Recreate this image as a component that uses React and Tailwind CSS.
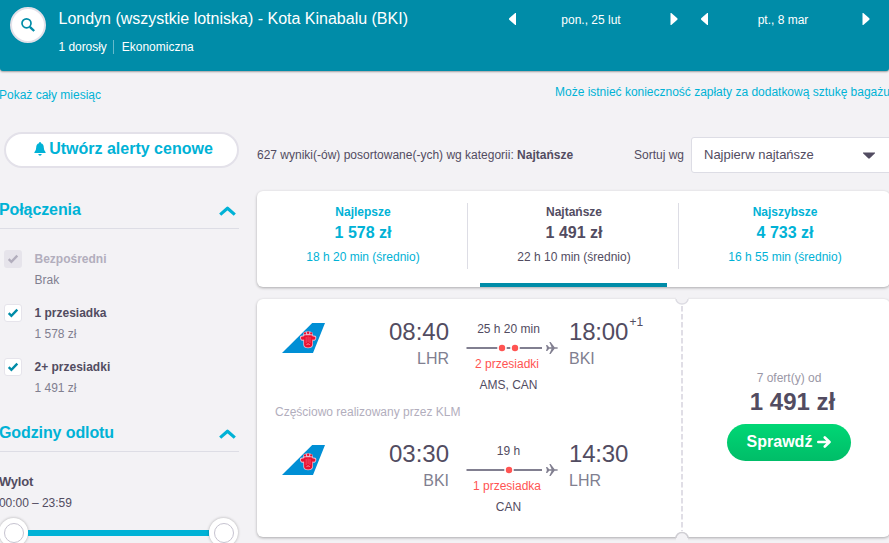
import React from "react";

function Chevron() {
  return (
    <svg width="17" height="10" viewBox="0 0 17 10" className="block" fill="none" stroke="#00b2d6" strokeWidth="3.2" strokeLinecap="butt" strokeLinejoin="round">
      <path d="M1.2 8.6 L8.5 2.2 L15.8 8.6" />
    </svg>
  );
}

function Triangle({ left }) {
  return (
    <svg width="8" height="12" viewBox="0 0 8 12" className="block" fill="#fff">
      {left ? <path d="M8 0 V12 H7.2 L1.2 6.8 Q0.7 6 1.2 5.2 L7.2 0 Z" /> : <path d="M0.5 0 V12 H1.3 L7.3 6.8 Q7.8 6 7.3 5.2 L1.3 0 Z" />}
    </svg>
  );
}

function SectionTitle({ children }) {
  return (
    <div className="flex h-[37px] w-[240px] items-center justify-between border-b border-[#dddde5] pr-[3.5px]">
      <h2 className="text-[16px] font-bold leading-[20px] tracking-[-0.1px] text-[#00b2d6]">{children}</h2>
      <div className="pt-[2px]"><Chevron /></div>
    </div>
  );
}

function StopFilter({ label, price, disabled }) {
  return (
    <div className="flex h-[54px] pl-1">
      <div className={disabled ? "flex size-[18px] items-center justify-center rounded-[3px] bg-[#e6e4eb]" : "flex size-[18px] items-center justify-center rounded-[3px] border border-[#e6e4eb] bg-white"}>
        <svg width="12" height="10" viewBox="0 0 12 10" fill="none" stroke={disabled ? "#b2aebd" : "#008ca8"} strokeWidth="2.4">
          <path d="M1.7 5.2 L4.4 7.8 L10.3 1.7" />
        </svg>
      </div>
      <div className="ml-[12.5px] text-[12px]">
        <div className={disabled ? "h-[18px] font-bold leading-[18px] text-[#b2aebd]" : "h-[18px] font-bold leading-[18px] text-[#524c61]"}>{label}</div>
        <div className="mt-[3px] leading-[18px] text-[#817f90]">{price}</div>
      </div>
    </div>
  );
}

function Knob() {
  return (
    <div className="flex size-[29px] items-center justify-center rounded-full bg-white shadow-[0_0_3px_rgba(0,0,0,0.3)]">
      <div className="size-[20px] rounded-full border border-[#c6c3d0]" />
    </div>
  );
}

function Tab({ title, price, time, active, divider }) {
  return (
    <div className="relative w-[211px] shrink-0 pt-3">
      <div className={(divider ? "border-r border-[#dddde5] " : "border-r border-transparent ") + "h-[66px] pl-[2px] text-center text-[12px] " + (active ? "text-[#524c61]" : "text-[#00b2d6]")}>
        <div className="font-bold leading-[18px]">{title}</div>
        <div className="text-[16px] font-bold leading-[23px]">{price}</div>
        <div className="pt-[4px] leading-[18px]">{time}</div>
      </div>
      {active && <div className="absolute bottom-0 left-[12px] h-[4px] w-[187px] bg-[#008ca8]" />}
    </div>
  );
}

function TailLogo() {
  return (
    <svg width="43" height="30" viewBox="0 0 43 30" className="mt-[6px] block shrink-0">
      <path d="M30.2 0 H43 L31 30 H0 Z" fill="#008fd5" />
      <path d="M18 15 Q17.5 12.2 21 12.6 L21.6 9.5 Q26 7 30.4 9.5 L31 12.6 Q34.8 12.2 34.3 15 Q34 18 31 17.8 V22 Q30.4 25.2 26.1 25.2 Q21.8 25.2 21.3 22 V17.8 Q18.3 18 18 15 Z" fill="#e9b9cd" />
      <path d="M18.9 15.2 Q18.6 13.2 21.6 13.6 Q22.2 11.8 24 12.2 H28.3 Q30.2 11.8 30.7 13.6 Q33.7 13.2 33.4 15.2 Q33 17.2 30.3 16.6 V21 Q30.4 24.4 26.1 24.4 Q21.8 24.4 22.1 21 V16.6 Q19.3 17.2 18.9 15.2 Z" fill="#ea1030" />
      <g fill="#ea1030"><circle cx="23" cy="10.4" r="1.1" /><circle cx="26.1" cy="9.7" r="1.2" /><circle cx="29.2" cy="10.4" r="1.1" /></g>
      <path d="M24.2 14 V20 M26.1 13.5 V19 M28 14 V20" stroke="#f7a0b2" strokeWidth="0.4" />
      <path d="M24.5 21.6 L26.1 20.8 L27.7 21.6" stroke="#f4c9d8" strokeWidth="0.7" fill="none" />
    </svg>
  );
}

function Route({ stops }) {
  return (
    <svg width="93" height="14" viewBox="0 0 93 14" className="block shrink-0 overflow-visible">
      <path d="M0.5 7 H76" stroke="#817f90" strokeWidth="2" />
      {stops.map((x) => <circle key={x} cx={x} cy="7" r="4.8" fill="#fff" />)}
      {stops.map((x) => <circle key={x} cx={x} cy="7" r="3.2" fill="#ff5452" />)}
      <path d="M80 4 H81.2 L83.2 6.3 H85.6 L83.3 1 H84.6 L88.6 6.3 H90.5 Q92 6.5 92 7 Q92 7.5 90.5 7.7 H88.6 L84.6 13 H83.3 L85.6 7.7 H83.2 L81.2 10 H80 L80.9 7 Z" fill="#817f90" />
    </svg>
  );
}

function Leg({ depart, from, duration, stops, stopLabel, via, arrive, to, extra }) {
  return (
    <div className="flex h-[79px] pl-[25px]">
      <TailLogo />
      <div className="w-[124px] shrink-0 pt-px text-right">
        <div className="text-[24px] leading-[28px] text-[#524c61]">{depart}</div>
        <div className="text-[16px] leading-[26px] text-[#817f90]">{from}</div>
      </div>
      <div className="ml-[17px] w-[85px] shrink-0 text-center text-[12px] text-[#524c61]">
        <div className="leading-[24px]">{duration}</div>
        <Route stops={stops} />
        <div className="-mt-px -ml-[3px] leading-[20px] whitespace-nowrap text-[#ff5452]">{stopLabel}</div>
        <div className="leading-[22px]">{via}</div>
      </div>
      <div className="ml-[18px] shrink-0 pt-px">
        <div className="flex text-[24px] leading-[28px] tracking-[-0.2px] text-[#524c61]">
          {arrive}
          {extra && <span className="-mt-[6px] ml-[1.5px] text-[12px] leading-[20px] tracking-normal">{extra}</span>}
        </div>
        <div className="text-[16px] leading-[26px] text-[#817f90]">{to}</div>
      </div>
    </div>
  );
}

export default function App() {
  return (
    <div className="h-[543px] w-[889px] overflow-hidden bg-[#f3f2f5] text-[12px] text-[#524c61] [font-family:'Liberation_Sans',Arial,sans-serif]">
      <header className="flex h-[71px] rounded-b-[3px] bg-[#008ca8] text-white shadow-[0_1px_2px_rgba(0,0,0,0.35)]">
        <div className="mt-[7px] ml-[10px] flex size-[36px] shrink-0 items-center justify-center rounded-full border-2 border-[#e3e1e9] bg-white">
          <svg width="16" height="16" viewBox="0 0 16 16" fill="none" stroke="#008ca8">
            <circle cx="6.5" cy="6.3" r="4.5" strokeWidth="1.7" />
            <path d="M9.8 9.8 L14.2 14" strokeWidth="2.4" />
          </svg>
        </div>
        <div className="ml-[12.5px] w-[446px] shrink-0 pt-[9px]">
          <h1 className="text-[16px] leading-[20px] whitespace-nowrap">Londyn (wszystkie lotniska) - Kota Kinabalu (BKI)</h1>
          <div className="mt-[11px] flex leading-[14px]">
            <span className="border-r border-[#66bacb] pr-[6px] tracking-[-0.05px]">1 dorosły</span>
            <span className="pl-[8px]">Ekonomiczna</span>
          </div>
        </div>
        <div className="mt-[13px] ml-[3.5px] flex h-[12px] w-[170px] shrink-0 items-center justify-between">
          <Triangle left /><span className="mr-[4px] pt-[2px] leading-[14px]">pon., 25 lut</span><Triangle />
        </div>
        <div className="mt-[13px] ml-[22px] flex h-[12px] w-[170px] shrink-0 items-center justify-between">
          <Triangle left /><span className="mr-[4px] pt-[2px] leading-[14px]">pt., 8 mar</span><Triangle />
        </div>
      </header>

      <div className="flex h-[61px] justify-between text-[#00b2d6]">
        <a className="-ml-px pt-[16px] leading-[16px] whitespace-nowrap">Pokaż cały miesiąc</a>
        <a className="w-[334px] pt-[13px] leading-[16px] tracking-[-0.01px] whitespace-nowrap">Może istnieć konieczność zapłaty za dodatkową sztukę bagażu</a>
      </div>

      <div className="flex">
        <aside className="w-[257px] shrink-0">
          <button className="ml-1 flex h-[36px] w-[235px] items-center justify-center rounded-full border-2 border-[#e3e1e9] bg-white pb-[2px] pl-[4px] text-[16px] font-bold whitespace-nowrap text-[#00b2d6]">
            <svg width="12" height="14" viewBox="0 0 12 14" fill="#00b2d6" className="mr-[3px]">
              <path d="M6 0 Q7 0 7 1.2 Q9.8 2 9.8 5.5 Q9.8 8.5 11.6 10.3 V11 H0.4 V10.3 Q2.2 8.5 2.2 5.5 Q2.2 2 5 1.2 Q5 0 6 0 Z M4.2 12 H7.8 Q7.4 13.7 6 13.7 Q4.6 13.7 4.2 12 Z" />
            </svg>
            Utwórz alerty cenowe
          </button>
          <div className="mt-[24px] -ml-px"><SectionTitle>Połączenia</SectionTitle></div>
          <div className="mt-[21px]">
            <StopFilter label="Bezpośredni" price="Brak" disabled />
            <StopFilter label="1 przesiadka" price="1 578 zł" />
            <StopFilter label="2+ przesiadki" price="1 491 zł" />
          </div>
          <div className="mt-[3px] -ml-px"><SectionTitle>Godziny odlotu</SectionTitle></div>
          <div className="-ml-px pt-[20px]">
            <div className="text-[13px] font-bold leading-[20px] tracking-[-0.2px]">Wylot</div>
            <div className="leading-[22px] tracking-[-0.05px]">00:00 – 23:59</div>
          </div>
          <div className="-ml-px mt-[4px] flex w-[239px] items-center">
            <Knob /><div className="h-[6px] flex-1 bg-[#00b2d6]" /><Knob />
          </div>
        </aside>

        <main className="w-[633px] shrink-0 pt-[5px]">
          <div className="flex h-[36px] items-center whitespace-nowrap">
            <p className="w-[377px] shrink-0">627 wyniki(-ów) posortowane(-ych) wg kategorii: <b>Najtańsze</b></p>
            <span className="w-[57px] shrink-0">Sortuj wg</span>
            <div className="flex h-[36px] w-[210px] shrink-0 items-center rounded-[3px] border border-[#dddde5] bg-white pl-[12px] text-[13px]">
              <span className="w-[159px]">Najpierw najtańsze</span>
              <svg width="12" height="7" viewBox="0 0 12 7" fill="#524c61"><path d="M0 0.5 H12 V1.3 L6.8 6.3 Q6 7 5.2 6.3 L0 1.3 Z" /></svg>
            </div>
          </div>

          <section className="mt-[18px] flex h-[96px] rounded-[6px] bg-white shadow-[0_1px_3px_rgba(0,0,0,0.3)]">
            <Tab title="Najlepsze" price="1 578 zł" time="18 h 20 min (średnio)" divider />
            <Tab title="Najtańsze" price="1 491 zł" time="22 h 10 min (średnio)" active divider />
            <Tab title="Najszybsze" price="4 733 zł" time="16 h 55 min (średnio)" />
          </section>

          <section className="relative mt-[12px] flex h-[238px] rounded-[6px] bg-white shadow-[0_1px_3px_rgba(0,0,0,0.3)]">
            <div className="w-[424px] shrink-0 pt-[18px]">
              <Leg depart="08:40" from="LHR" duration="25 h 20 min" stops={[36, 49]} stopLabel="2 przesiadki" via="AMS, CAN" arrive="18:00" to="BKI" extra="+1" />
              <div className="mt-[6px] h-[20px] pl-[18px] leading-[20px] text-[#b2aebd]">Częściowo realizowany przez KLM</div>
              <div className="mt-[17px]">
                <Leg depart="03:30" from="BKI" duration="19 h" stops={[43]} stopLabel="1 przesiadka" via="CAN" arrive="14:30" to="LHR" />
              </div>
            </div>
            <svg width="2" height="238" className="block shrink-0"><path d="M1 7 V232" stroke="#e0dee6" strokeWidth="2" strokeDasharray="5.5 2.5" /></svg>
            <svg width="14" height="8" viewBox="0 0 14 8" className="absolute -top-[2px] left-[418px]"><path d="M1 0 V2 A6 5 0 0 0 13 2 V0 Z" fill="#f3f2f5" /><path d="M1 2 A6 5 0 0 0 13 2" fill="none" stroke="#dddce3" strokeWidth="1.5" /></svg>
            <svg width="14" height="10" viewBox="0 0 14 10" className="absolute -bottom-[4px] left-[418px]"><path d="M1 10 V6 A6 5 0 0 1 13 6 V10 Z" fill="#f3f2f5" /><path d="M1 7 A6 5.5 0 0 1 13 7" fill="none" stroke="#cfced3" strokeWidth="1.5" /></svg>
            <div className="flex w-[212px] shrink-0 flex-col items-center pt-[70px]">
              <div className="leading-[18px] text-[#9a97a6]">7 ofert(y) od</div>
              <div className="ml-[7px] text-[24px] font-bold leading-[30px]">1 491 zł</div>
              <button className="mt-[7px] flex h-[37px] w-[124px] items-center justify-center rounded-full bg-gradient-to-b from-[#00d775] to-[#00bd68] pb-[2px] text-[16px] font-bold text-white">
                Sprawdź
                <svg width="14" height="12" viewBox="0 0 14 12" className="mt-[1px] ml-[5px]" fill="none" stroke="#fff" strokeWidth="2.6" strokeLinecap="round" strokeLinejoin="round"><path d="M1.3 6 H12 M7.8 1.5 L12.5 6 L7.8 10.5" /></svg>
              </button>
            </div>
          </section>
        </main>
      </div>
    </div>
  );
}
